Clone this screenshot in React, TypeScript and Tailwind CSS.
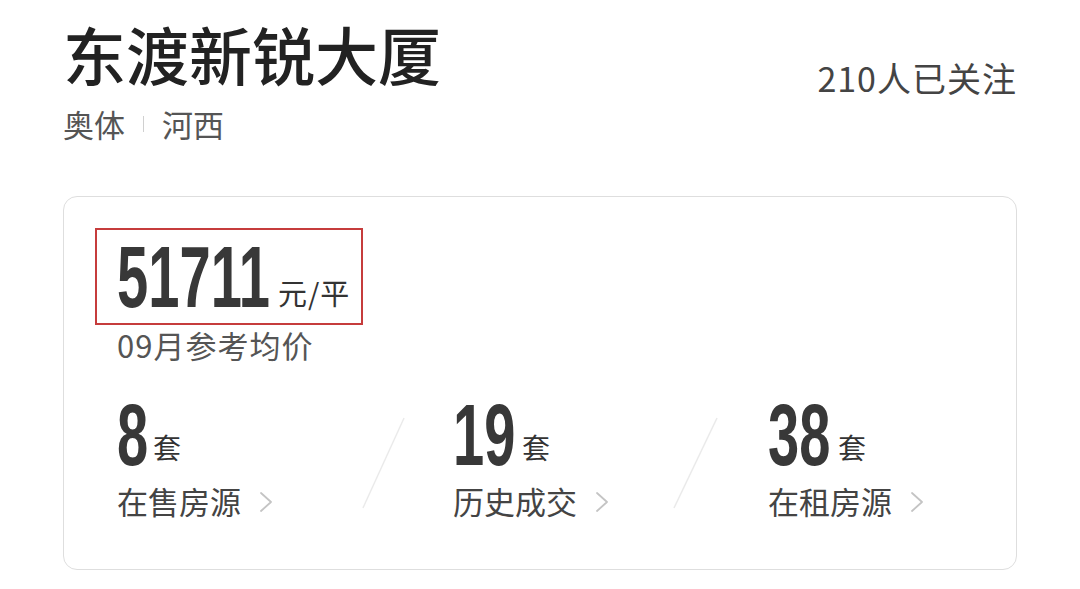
import type { ReactNode } from 'react'

const CJK = "font-['Noto_Sans_CJK_SC','Noto_Sans',sans-serif]"
const NUM = "font-['Liberation_Sans',Arial,sans-serif]"

function BigNum({ value, width }: { value: string; width: string }) {
  return (
    <div className={`${width} shrink-0 overflow-visible h-[72px]`}>
      <span className={`${NUM} inline-block origin-left scale-x-[0.645] whitespace-nowrap text-[87px] font-bold leading-[72px] text-[#383838]`}>
        {value}
      </span>
    </div>
  )
}

function Chevron() {
  return (
    <svg width="14" height="22" viewBox="0 0 14 22" className="ml-[18px] mt-[2px]">
      <polyline points="2,2 12,11 2,20" fill="none" stroke="#c4c4c4" strokeWidth="1.8" strokeLinecap="round" strokeLinejoin="round" />
    </svg>
  )
}

function Slash({ width }: { width: string }) {
  return (
    <div className={`${width} shrink-0 pt-[18px]`}>
      <svg width="100%" height="92" viewBox="0 0 45 92" preserveAspectRatio="none">
        <line x1="44" y1="1" x2="1" y2="91" stroke="#eaeaea" strokeWidth="1.5" />
      </svg>
    </div>
  )
}

function Stat({ num, numW, label, blockW, slash }: { num: string; numW: string; label: string; blockW: string; slash?: ReactNode }) {
  return (
    <div className="flex">
      <div className={`${blockW} shrink-0`}>
        <div className="flex items-baseline h-[72px]">
          <BigNum value={num} width={numW} />
          <span className="ml-[8px] text-[28px] leading-none text-[#333] -translate-y-[6px]">套</span>
        </div>
        <div className="flex items-center mt-[12px]">
          <span className="text-[31px] leading-[36px] text-[#444]">{label}</span>
          <Chevron />
        </div>
      </div>
      {slash}
    </div>
  )
}

export default function App() {
  return (
    <div className={`${CJK} w-[1080px] h-[589px] bg-white px-[63px] overflow-hidden`}>
      <div className="flex items-start justify-between pt-[15px]">
        <div>
          <h1 className="text-[63px] font-medium leading-[76px] text-[#222]">东渡新锐大厦</h1>
          <div className="flex items-center mt-[13px] text-[31px] leading-[40px] text-[#555]">
            <span>奥体</span>
            <span className="mx-[18px] h-[16px] w-px bg-[#d0d0d0]" />
            <span>河西</span>
          </div>
        </div>
        <div className="pt-[43px] text-[34px] leading-[40px] tracking-[1px] text-[#444]">210人已关注</div>
      </div>

      <div className="mt-[52px] rounded-[14px] border border-[#dedede] h-[374px] pl-[53px] pt-[31px]">
        <div className="-ml-[22px] w-[268px] h-[97px] border-2 border-[#c63c3c] flex items-baseline pl-[20px] pt-[11px]">
          <BigNum value="51711" width="w-[158px]" />
          <span className="ml-[3px] text-[29px] leading-none tracking-[1px] text-[#333] -translate-y-[2px]">元/平</span>
        </div>
        <div className="text-[31px] leading-[40px] tracking-[1px] text-[#555]">09月参考均价</div>

        <div className="flex mt-[34px]">
          <div className="w-[336px] shrink-0">
            <Stat num="8" numW="w-[28px]" label="在售房源" blockW="w-[245px]" slash={<Slash width="w-[43px]" />} />
          </div>
          <div className="w-[315px] shrink-0">
            <Stat num="19" numW="w-[61px]" label="历史成交" blockW="w-[220px]" slash={<Slash width="w-[45px]" />} />
          </div>
          <div>
            <Stat num="38" numW="w-[62px]" label="在租房源" blockW="w-[220px]" />
          </div>
        </div>
      </div>
    </div>
  )
}
